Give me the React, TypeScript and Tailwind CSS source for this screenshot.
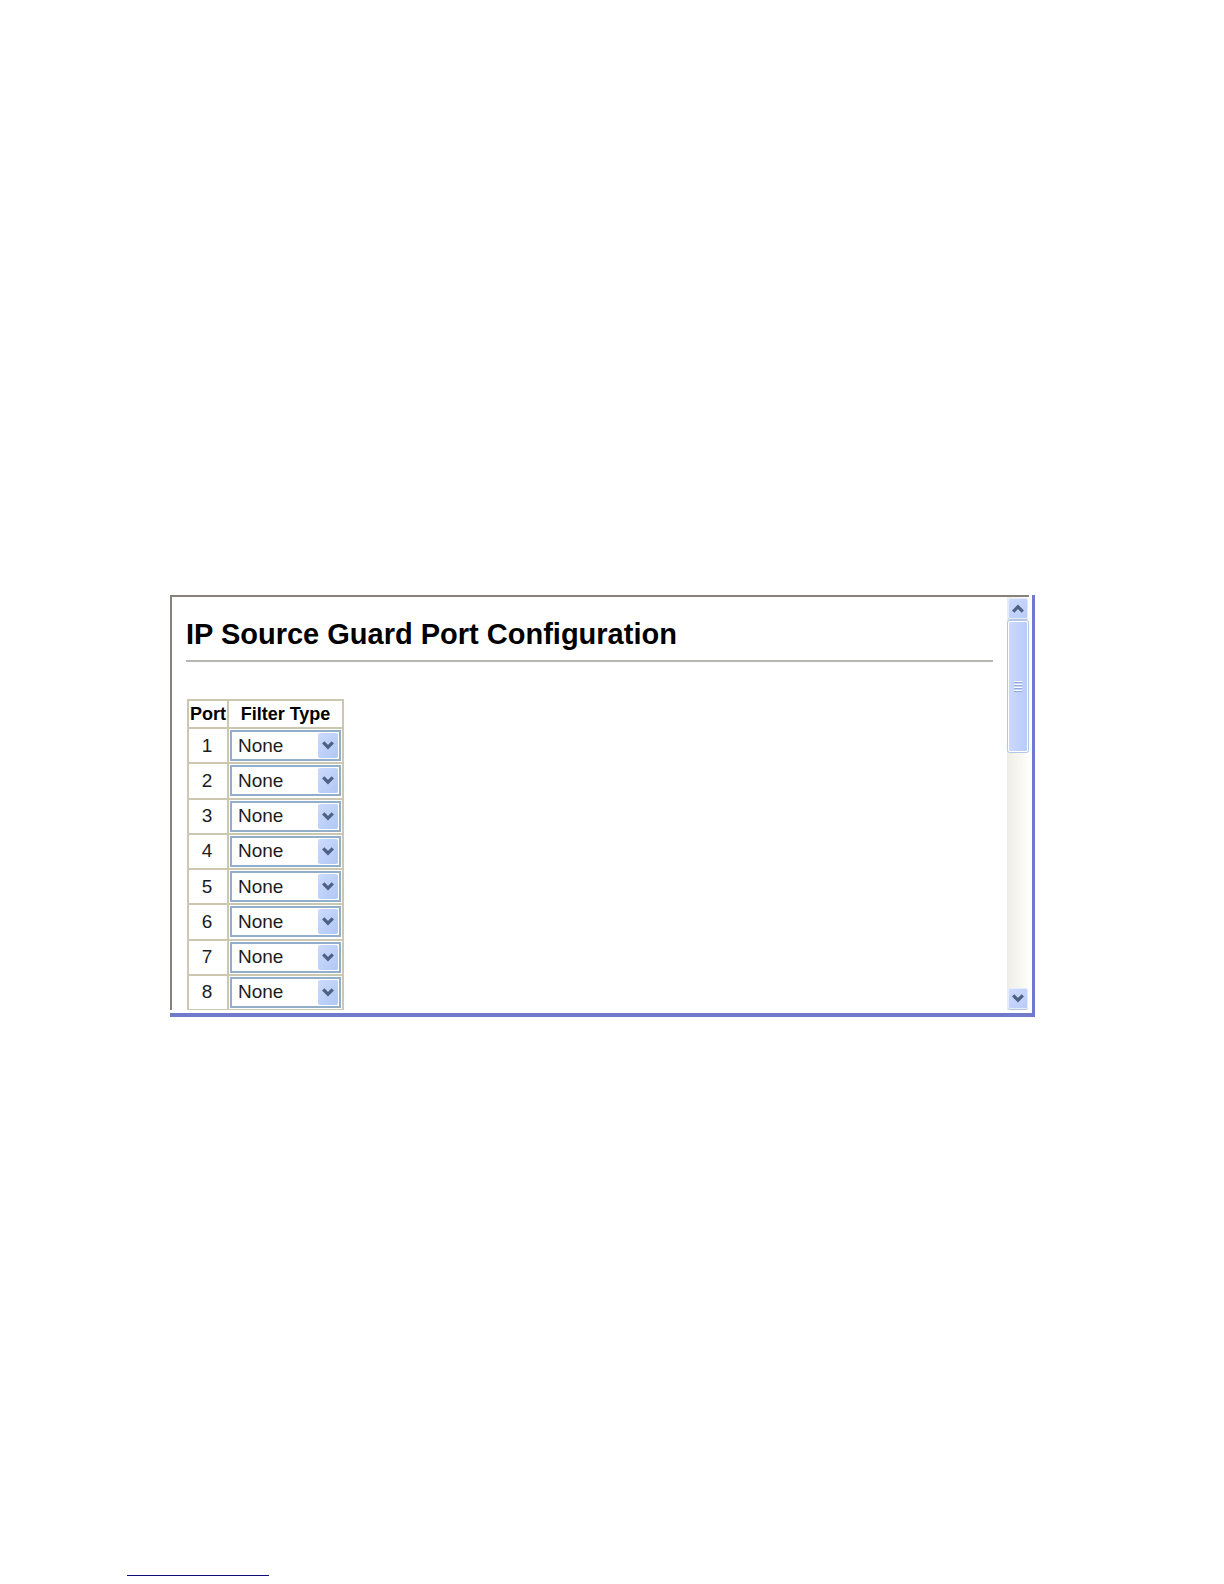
const ports = [1, 2, 3, 4, 5, 6, 7, 8];

function Chevron({up = false}: {up?: boolean}) {
    return (
        <svg viewBox="0 0 12 9" className={up ? "h-[9px] w-3 rotate-180" : "h-[9px] w-3"} fill="none" stroke="#4d6185" strokeWidth="3.2">
            <path d="M1.2 1.4 6 6.2 10.8 1.4" />
        </svg>
    )
}

function FilterSelect({port}: {port: number}) {
    return (
        <div className="relative">
            <select aria-label={`Filter type for port ${port}`} className="block h-[31px] w-full appearance-none border-2 border-[#93aecb] bg-white pl-1.5 text-[19px] leading-6 text-[#1c1c1c]">
                <option>None</option>
                <option>SIP</option>
                <option>SIP-MAC</option>
            </select>
            <span className="pointer-events-none absolute top-[3px] right-[3px] flex h-[25px] w-5 items-center justify-center rounded-xs bg-linear-to-br from-[#ccdafc] to-[#b0c8f4]">
                <Chevron />
            </span>
        </div>
    )
}

function Scrollbar() {
    return (
        <div className="flex w-[22px] shrink-0 flex-col bg-linear-to-r from-[#eeede5] to-[#fefefb] px-px py-px">
            <button aria-label="Scroll up" className="flex h-[21px] items-center justify-center rounded-xs border border-[#e4ecfc] bg-linear-to-br from-[#cddafd] to-[#b9cbf8] shadow-[0_1px_0_#b4c6dc]">
                <Chevron up />
            </button>
            <div className="mt-0.5 flex h-[131px] flex-col items-center justify-center gap-px rounded-xs border border-white bg-linear-to-r from-[#cbd9fd] to-[#b9cbf9] shadow-[0_0_0_1px_#b4c6e4]">
                <span className="h-0.5 w-2 border-t border-white bg-[#8eaae6]" />
                <span className="h-0.5 w-2 border-t border-white bg-[#8eaae6]" />
                <span className="h-0.5 w-2 border-t border-white bg-[#8eaae6]" />
                <span className="h-0.5 w-2 border-t border-white bg-[#8eaae6]" />
            </div>
            <button aria-label="Scroll down" className="mt-auto flex h-[21px] items-center justify-center rounded-xs border border-[#e4ecfc] bg-linear-to-br from-[#cddafd] to-[#b9cbf8] shadow-[0_1px_0_#b4c6dc]">
                <Chevron />
            </button>
        </div>
    )
}

export default function App() {
    return (
        <div className="flex min-h-screen flex-col justify-between bg-white pt-[595px] pr-[189px] pb-2 pl-[170px] font-['Liberation_Sans',Arial,sans-serif] text-black">
            <main className="border-r-3 border-b-4 border-[#7079cb] pr-[3px] pb-[3px]">
                <div className="flex h-[415px] overflow-hidden border-t-2 border-l-2 border-[#85827c]">
                    <section className="grow pt-[21px] pr-[14px] pl-[14px]">
                        <h1 className="text-[29px] leading-8 font-bold">IP Source Guard Port Configuration</h1>
                        <hr className="mt-2.5 border-t-2 border-[#b8b6b1]" />
                        <table className="ml-px mt-[37px] h-[312px] w-[157px] table-fixed border-collapse text-[19px] leading-6">
                            <thead>
                                <tr className="text-[18px]">
                                    <th className="h-7 w-10 border-2 border-[#cbc7b0] p-0">Port</th>
                                    <th className="border-2 border-[#cbc7b0] p-0">Filter Type</th>
                                </tr>
                            </thead>
                            <tbody>
                                {ports.map((port) => (
                                    <tr key={port}>
                                        <td className="border-2 border-[#cbc7b0] py-0 pr-0.5 pl-0 text-center text-[#1c1c1c]">{port}</td>
                                        <td className="border-2 border-[#cbc7b0] p-px"><FilterSelect port={port} /></td>
                                    </tr>
                                ))}
                            </tbody>
                        </table>
                    </section>
                    <Scrollbar />
                </div>
            </main>
            <hr className="-ml-[43px] h-px w-[142px] border-0 bg-[#10107c]" />
        </div>
    )
}
